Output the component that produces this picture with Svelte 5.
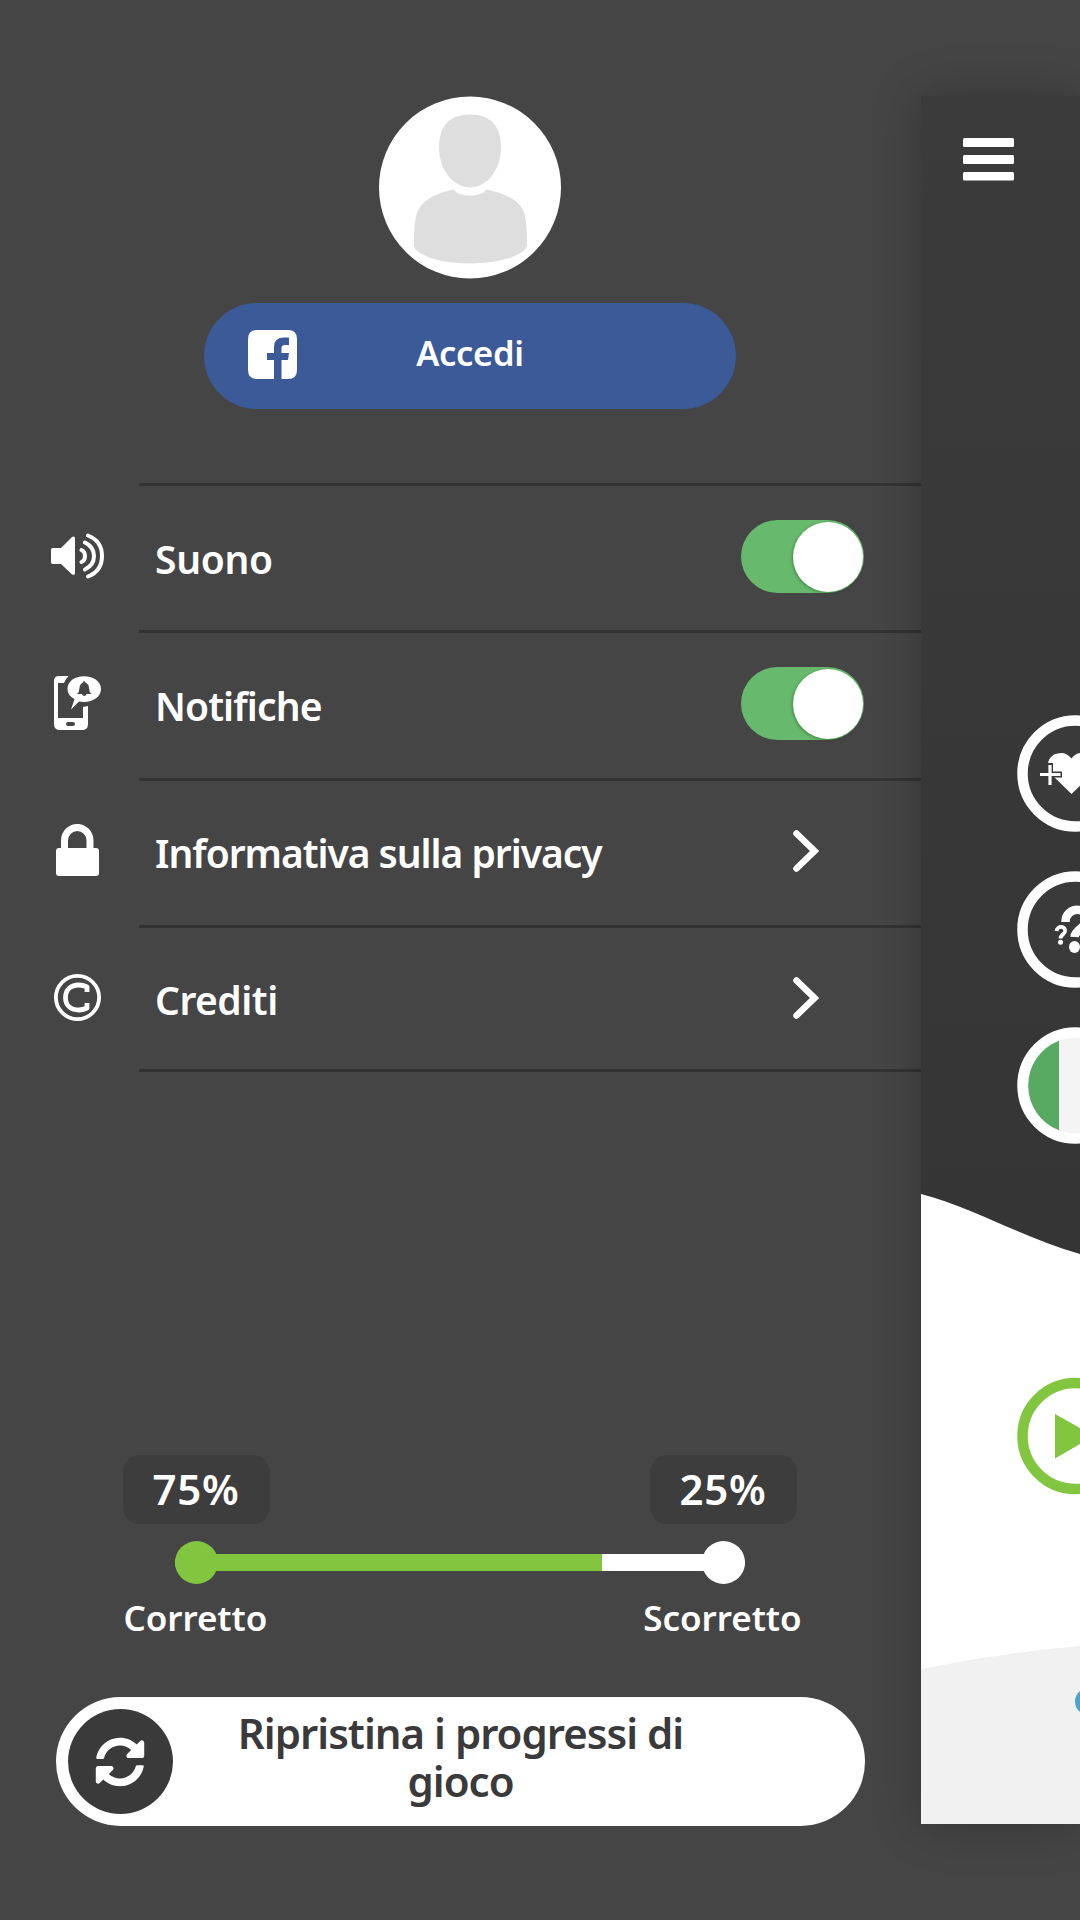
<script>
  const rows = [
    { icon: 'sound', label: 'Suono', toggle: true, fit: 'suono' },
    { icon: 'notify', label: 'Notifiche', toggle: true, fit: 'notifiche' },
    { icon: 'lock', label: 'Informativa sulla privacy', toggle: false, fit: 'privacy' },
    { icon: 'copyright', label: 'Crediti', toggle: false, fit: 'crediti' }
  ];
  const correct = 75;
</script>

<div class="screen">
  <main class="menu">
    <svg class="avatar" viewBox="0 0 182 182">
      <circle cx="91" cy="91" r="91" fill="#fff" />
      <path d="M91 18C111 18 122 29 122 51C122 74 107 91 91 91S60 74 60 51C60 29 71 18 91 18Z" fill="#dedede" />
      <path d="M75 93C79 101 103 101 107 93C129 97 144 106 146 120C148 129 148 137 148 149C146 159 120 167 91 167S37 159 35 149C35 137 35 129 37 120C40 106 54 97 75 93Z" fill="#dedede" />
    </svg>

    <button class="login">
      <svg class="fb" viewBox="0 0 49 49">
        <path fill-rule="evenodd" d="M9 0H40Q49 0 49 9V40Q49 49 40 49H33.500V30H40L41 23H33.500V18Q33.500 15 37 15H41V7.500H36Q26 7.500 26 17V23H19V30H26V49H9Q0 49 0 40V9Q0 0 9 0Z" fill="#fff" />
      </svg>
      <span>Accedi</span>
    </button>

    <ul class="options">
      {#each rows as row}
        <li>
          <div class="icon">
            {#if row.icon === 'sound'}
              <svg class="sound" width="54" height="46" viewBox="0 0 54 46" fill="none">
                <path d="M2.500 15H11L21.500 4.500Q25 2 25 6V39.500Q25 43.500 21.500 41L11 31H2.500Q1 31 1 29V17Q1 15 2.500 15Z" fill="#fff" />
                <path d="M31.500 17Q35 18.500 35 23T31.500 29M35 9.500Q44 14 44 23T35 36.500M38 2.500Q52 8 52 23T38 43.500" stroke="#fff" stroke-width="4" stroke-linecap="round" />
              </svg>
            {:else if row.icon === 'notify'}
              <svg width="47" height="54" viewBox="0 0 47 54">
                <path fill-rule="evenodd" d="M5 0H14.500Q11.500 3 10 7H4V42H29V31L34 30V48Q34 54 28 54H6Q0 54 0 48V5Q0 0 5 0ZM14 46Q12 46 12 48T14 50H19Q21 50 21 48T19 46Z" fill="#fff" />
                <path d="M30 .300C39.500 .300 47 5.500 47 13S39.500 26 30 26Q27 26 25 25.600L17 33.500L20.500 23Q13.500 19.500 13.500 13C13.500 5.500 20.500 .300 30 .300Z" fill="#fff" />
                <path d="M30 5Q31 5 31.300 6.500Q35 8 35 12Q35 16 37.500 18H32.500Q32 20 30.300 20T28 18H23Q25.500 16 25.500 12Q25.500 8 29 6.500Q29.200 5 30 5Z" fill="#454545" />
              </svg>
            {:else if row.icon === 'lock'}
              <svg width="43" height="52" viewBox="0 0 43 52">
                <path d="M8.500 26V16.500A12.700 13 0 0 1 34 16.500V26" fill="none" stroke="#fff" stroke-width="7" />
                <rect y="24" width="43" height="28" rx="3" fill="#fff" />
              </svg>
            {:else}
              <svg width="47" height="47" viewBox="0 0 47 47" fill="none" stroke="#fff">
                <circle cx="23.500" cy="23.500" r="21.600" stroke-width="3.800" />
                <path d="M33 18V13Q29 11 25 11C17 11 11.500 15.500 11.500 23.500S17 36 25 36Q29 36 33 34V29" stroke-width="4.800" stroke-linejoin="round" />
              </svg>
            {/if}
          </div>
          <div class="line">
            <span class="label {row.fit}">{row.label}</span>
            {#if row.toggle}
              <div class="toggle"><i></i></div>
            {:else}
              <svg class="chevron" width="26" height="42" viewBox="0 0 26 42">
                <path d="M3.500 3.500L21.500 21L3.500 38.500" fill="none" stroke="#fff" stroke-width="6.500" stroke-linecap="round" stroke-linejoin="miter" />
              </svg>
            {/if}
          </div>
        </li>
      {/each}
    </ul>

    <section class="stats">
      <div class="ends values">
        <b>{correct}%</b>
        <b>{100 - correct}%</b>
      </div>
      <div class="meter">
        <div class="bar"><div class="fill" style="width: {correct}%"></div></div>
        <i class="dot green"></i>
        <i class="dot last"></i>
      </div>
      <div class="ends names">
        <span>Corretto</span>
        <span>Scorretto</span>
      </div>
    </section>

    <button class="reset">
      <span class="disc">
        <svg width="50" height="50" viewBox="0 0 512 512" fill="#fff">
          <path d="M370.720 133.280C339.458 104.008 298.888 87.962 255.848 88c-77.458.068-144.328 53.178-162.791 126.850-1.344 5.363-6.122 9.150-11.651 9.150H24.103c-7.498 0-13.194-6.807-11.807-14.176C33.933 94.924 134.813 8 256 8c66.448 0 126.791 26.136 171.315 68.685L463.030 40.970C478.149 25.851 504 36.559 504 57.941V192c0 13.255-10.745 24-24 24H345.941c-21.382 0-32.090-25.851-16.971-40.971l41.750-41.749zM32 296h134.059c21.382 0 32.090 25.851 16.971 40.971l-41.750 41.750c31.262 29.273 71.835 45.319 114.876 45.280 77.418-.070 144.315-53.144 162.787-126.849 1.344-5.363 6.122-9.150 11.651-9.150h57.304c7.498 0 13.194 6.807 11.807 14.176C478.067 417.076 377.187 504 256 504c-66.448 0-126.791-26.136-171.315-68.685L48.970 471.030C33.851 486.149 8 475.441 8 454.059V320c0-13.255 10.745-24 24-24z" />
        </svg>
      </span>
      <span class="text">Ripristina i progressi di<br />gioco</span>
    </button>
  </main>

  <aside class="game">
    <svg class="burger" width="51" height="43" viewBox="0 0 51 43" fill="#fff">
      <rect width="51" height="9" rx="1.500" />
      <rect y="17" width="51" height="9" rx="1.500" />
      <rect y="34" width="51" height="8.500" rx="1.500" />
    </svg>
    <svg class="scene" width="159" height="1728" viewBox="921 96 159 1728">
      <path d="M921 1194C975 1208 1025 1239 1080 1254V1824H921Z" fill="#fff" />
      <path d="M921 1669Q1000 1653 1080 1646V1824H921Z" fill="#f1f1f1" />
      <circle cx="1088.500" cy="1701.500" r="13.500" fill="#4fa3c4" />
      <g fill="#3a3a3a" stroke="#fff" stroke-width="10.500">
        <circle cx="1075.500" cy="773.500" r="53" />
        <circle cx="1075.500" cy="929.500" r="53" />
        <circle cx="1075.500" cy="1085.500" r="53" fill="#f4f4f4" />
        <circle cx="1075.500" cy="1436" r="53" fill="#fff" stroke="#82c53f" />
      </g>
      <path d="M1059 1040.700A48 48 0 0 0 1059 1130.300Z" fill="#58aa62" />
      <path d="M1071.500 794L1052 775Q1043 762 1054 754.500Q1065 750 1071.500 758.500Q1078 750 1089 754.500Q1100 762 1091 775Z" fill="#fff" />
      <path d="M1050 763V786M1040 774.500H1062" stroke="#3a3a3a" stroke-width="6" />
      <path d="M1050 765V785M1040 774.500H1060.500" stroke="#fff" stroke-width="3.200" />
      <path d="M1065.500 922C1065.500 905 1091 907 1087 921C1085 928 1075 930 1074.500 937" fill="none" stroke="#fff" stroke-width="8.500" />
      <ellipse cx="1074.500" cy="947" rx="5.500" ry="6" fill="#fff" />
      <path d="M1056.500 931C1057 925.500 1066 925.500 1065 931.500C1064.500 934 1060.500 935 1060.500 938.500" fill="none" stroke="#fff" stroke-width="3.800" />
      <circle cx="1060.500" cy="942.200" r="2.500" fill="#fff" />
      <path d="M1055 1414L1094 1436L1055 1458.500Z" fill="#82c53f" />
    </svg>
  </aside>
</div>

<style>
  :global(body) {
    margin: 0;
    background: #454545;
  }
  .screen {
    display: grid;
    grid-template-columns: 921px 159px;
    width: 1080px;
    height: 1920px;
    overflow: hidden;
    background: #454545;
    color: #fff;
    font: 600 39px/48px "Noto Sans", "Open Sans", sans-serif;
  }
  button {
    border: 0;
    padding: 0;
    color: inherit;
    font: inherit;
  }
  svg {
    display: block;
    flex: none;
  }
  span {
    white-space: nowrap;
  }
  .menu {
    display: flex;
    flex-direction: column;
    padding-top: 96px;
  }
  .avatar {
    width: 182px;
    height: 183px;
    margin-left: 379px;
  }
  .login {
    display: grid;
    grid-template-columns: 44px 49px 1fr 93px;
    align-items: center;
    width: 532px;
    height: 106px;
    margin: 24px 0 0 204px;
    border-radius: 53px;
    background: #3c5998;
    font-size: 34.500px;
  }
  .login span {
    padding-bottom: 6px;
    letter-spacing: -.300px;
  }
  .fb {
    grid-column: 2;
    width: 49px;
    height: 49px;
    margin-bottom: 3px;
  }
  .options {
    list-style: none;
    margin: 74px 0 0;
    padding: 0;
    height: 586px;
  }
  .options li {
    display: flex;
    height: 147.300px;
  }
  .icon {
    display: flex;
    align-items: center;
    justify-content: center;
    width: 77px;
    padding: 1px 23px 0 39px;
    height: 143px;
  }
  .sound {
    margin-right: 2px;
  }
  .line {
    box-sizing: border-box;
    display: flex;
    flex: 1;
    height: 146px;
    align-items: center;
    justify-content: space-between;
    padding: 0 57px 2px 16px;
    border-top: 3px solid #333;
  }
  .options li:last-child .line {
    border-bottom: 3px solid #333;
    padding-bottom: 0;
    height: 147px;
  }
  .label {
    padding-top: 4px;
  }
  .suono {
    letter-spacing: -.300px;
  }
  .notifiche {
    letter-spacing: -.900px;
  }
  .privacy {
    letter-spacing: -1.050px;
  }
  .crediti {
    letter-spacing: -.500px;
  }
  .toggle {
    display: flex;
    justify-content: flex-end;
    width: 121.500px;
    height: 70px;
    padding: 1.500px 1.500px 1.500px 0;
    border-radius: 37px;
    background: #67b96d;
  }
  .toggle i {
    width: 70px;
    height: 70px;
    border-radius: 50%;
    background: #fff;
    box-shadow: -1px 1px 3px rgba(0, 60, 0, .35);
  }
  .chevron {
    margin-right: 45px;
  }
  .stats {
    width: 680px;
    margin: 386px 0 0 122.500px;
  }
  .ends {
    display: flex;
    justify-content: space-between;
  }
  .values {
    width: 674px;
    font-size: 42px;
  }
  .values b {
    width: 147px;
    height: 69px;
    border-radius: 17px;
    background: #3d3d3d;
    font-weight: 600;
    line-height: 67px;
    text-align: center;
    letter-spacing: .800px;
  }
  .meter {
    display: grid;
    align-items: center;
    width: 570px;
    margin: 17px 0 0 52px;
  }
  .dot {
    grid-area: 1 / 1;
    width: 43px;
    height: 43px;
    border-radius: 50%;
    background: #fff;
  }
  .dot.last {
    justify-self: end;
  }
  .dot.green {
    background: #82c53f;
  }
  .bar {
    grid-area: 1 / 1;
    height: 17px;
    border-radius: 9px;
    overflow: hidden;
    background: #fff;
  }
  .fill {
    height: 100%;
    background: #82c53f;
  }
  .names {
    margin: 10px 0 0 1px;
    width: 678px;
    font-size: 35px;
    letter-spacing: -.050px;
  }
  .reset {
    display: grid;
    grid-template-columns: 105px 576px;
    align-items: center;
    box-sizing: border-box;
    width: 809px;
    height: 129px;
    margin: 55px 0 0 56px;
    padding-left: 11.500px;
    border-radius: 65px;
    background: #fff;
    color: #3a3a3a;
    font-size: 42px;
  }
  .disc {
    display: grid;
    place-items: center;
    width: 105px;
    height: 105px;
    border-radius: 50%;
    background: #3a3a3a;
  }
  .reset .text {
    padding-bottom: 9px;
    letter-spacing: -1px;
  }
  .game {
    display: grid;
    height: 1728px;
    margin-top: 96px;
    background: linear-gradient(#3b3b3b, #353535 1150px);
    box-shadow: 0 0 44px rgba(0, 0, 0, .26);
  }
  .burger {
    grid-area: 1 / 1;
    margin: 42px 0 0 42px;
  }
  .scene {
    grid-area: 1 / 1;
  }
</style>
